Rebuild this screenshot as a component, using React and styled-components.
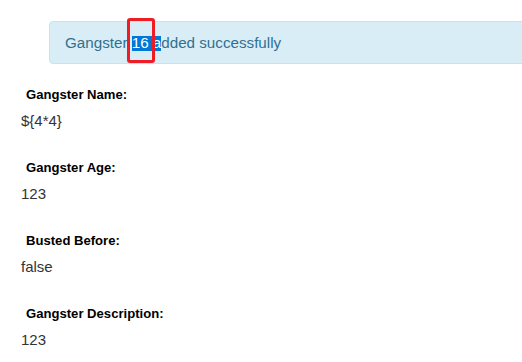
import React from 'react'
import styled, { createGlobalStyle } from 'styled-components'

const GlobalStyle = createGlobalStyle`
  html, body {
    margin: 0;
    padding: 0;
    background: #fff;
    overflow: hidden;
  }
  body {
    font-family: "Liberation Sans", Arial, Helvetica, sans-serif;
    color: #333;
  }
`

const fields = [
  { label: 'Gangster Name:', value: '${4*4}' },
  { label: 'Gangster Age:', value: '123' },
  { label: 'Busted Before:', value: 'false' },
  { label: 'Gangster Description:', value: '123' },
]

function App() {
  return (
    <Page>
      <GlobalStyle />
      <Alert>
        Gangster <Selected>16 a</Selected>dded successfully
        <Marker />
      </Alert>

      <Details>
        {fields.map((f) => (
          <Field key={f.label}>
            <Label>{f.label}</Label>
            <Value>{f.value}</Value>
          </Field>
        ))}
      </Details>
    </Page>
  )
}

const Page = styled.div`
  padding: 21px 0 0 21px;
  overflow: hidden;
`

// the alert runs off the right edge in the screenshot
const Alert = styled.div`
  position: relative;
  margin-left: 28px;
  margin-right: -40px;
  padding: 11px 15px 10px;
  border: 1px solid #bce8f1;
  border-radius: 4px;
  background: #d9edf7;
  color: #31708f;
  font-size: 15.2px;
  line-height: 20px;
  white-space: nowrap;
`

const Selected = styled.span`
  display: inline-block;
  line-height: 14px;
  padding-bottom: 1px;
  background: #0078d7;
  color: #fff;
`

const Marker = styled.span`
  position: absolute;
  left: 77px;
  top: -4px;
  width: 22px;
  height: 39px;
  border: 3px solid #ee1c25;
  border-radius: 3px;
  pointer-events: none;
`

const Details = styled.div`
  display: flex;
  flex-direction: column;
  gap: 27px;
  margin-top: 21px;
`

const Field = styled.div`
  display: flex;
  flex-direction: column;
  gap: 6px;
`

const Label = styled.div`
  padding-left: 5px;
  font-size: 13.1px;
  font-weight: bold;
  line-height: 20px;
  color: #000;
`

const Value = styled.div`
  font-size: 15px;
  line-height: 20px;
  color: #333;
`

export default App
